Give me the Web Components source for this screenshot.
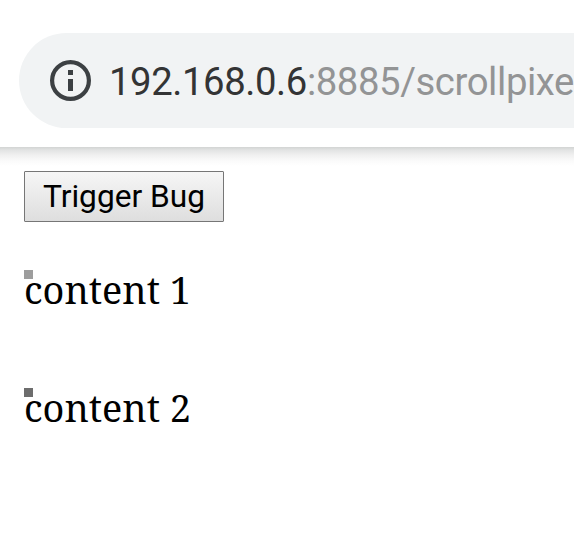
<!DOCTYPE html>
<html lang="en">
<head>
<meta charset="utf-8">
<title>scrollpixel</title>
<style>
html,body{margin:0;height:100%;overflow:hidden;background:#fff}
</style>
</head>
<body>
<script>
const define = (name, html) => customElements.define(name, class extends HTMLElement {
  constructor() {
    super();
    this.attachShadow({ mode: 'open' }).innerHTML = html;
  }
});

define('info-icon', `
<style>:host{display:block;width:42px;height:41px;flex:none}svg{display:block}</style>
<svg width="42" height="41" viewBox="0 0 42 41">
  <circle cx="20.5" cy="20.5" r="18.4" fill="none" stroke="#3c4043" stroke-width="4.2"/>
  <path d="M18 10h5v5h-5zM18 19h5v12h-5z" fill="#3c4043"/>
</svg>`);

define('address-bar', `
<style>
:host{display:block;position:relative;box-sizing:border-box;height:147px;padding:33px 0 19px 19px;background:#fff}
:host::after{content:"";position:absolute;left:0;right:0;top:100%;height:19px;background:linear-gradient(#d2d4d3,#e2e3e3 16%,#f0f0f0 42%,#fafafa 72%,#fff)}
.pill{box-sizing:border-box;height:95px;border-radius:47.5px 0 0 47.5px;background:#f1f3f4;display:flex;align-items:center;padding:0 0 0 31px;overflow:hidden}
.url{margin-left:17px;font:38.3px/50px Roboto,sans-serif;letter-spacing:-.42px;white-space:nowrap;color:#939495;padding-top:2px}
::slotted(*){color:#333435}
</style>
<div class="pill"><info-icon></info-icon><div class="url"><slot name="host"></slot><slot></slot></div></div>`);

define('push-button', `
<style>
:host{display:block}
button{display:block;box-sizing:border-box;width:200px;height:51px;margin:0;padding:0;border:1px solid #767676;border-radius:1px;background:linear-gradient(#f6f6f6,#dedede);color:#000;font:31.7px/49px Roboto,sans-serif;text-align:center;white-space:nowrap}
</style>
<button><slot></slot></button>`);

define('content-block', `
<style>
:host{display:block;position:relative;height:118px;font:37.8px/39px "Noto Serif",serif;color:#000}
.pixel{position:absolute;left:0;top:0;width:9px;height:9px;background:var(--pixel)}
.text{white-space:nowrap}
</style>
<div class="pixel"></div><div class="text"><slot></slot></div>`);

define('test-page', `
<style>
:host{display:block;padding:24px 24px 0}
.blocks{margin-top:48px}
</style>
<push-button>Trigger Bug</push-button>
<div class="blocks">
  <content-block style="--pixel:#9d9d9d">content 1</content-block>
  <content-block style="--pixel:#6d6d6d">content 2</content-block>
</div>`);
</script>
<address-bar><span slot="host">192.168.0.6</span>:8885/scrollpixe</address-bar>
<test-page></test-page>
</body>
</html>
